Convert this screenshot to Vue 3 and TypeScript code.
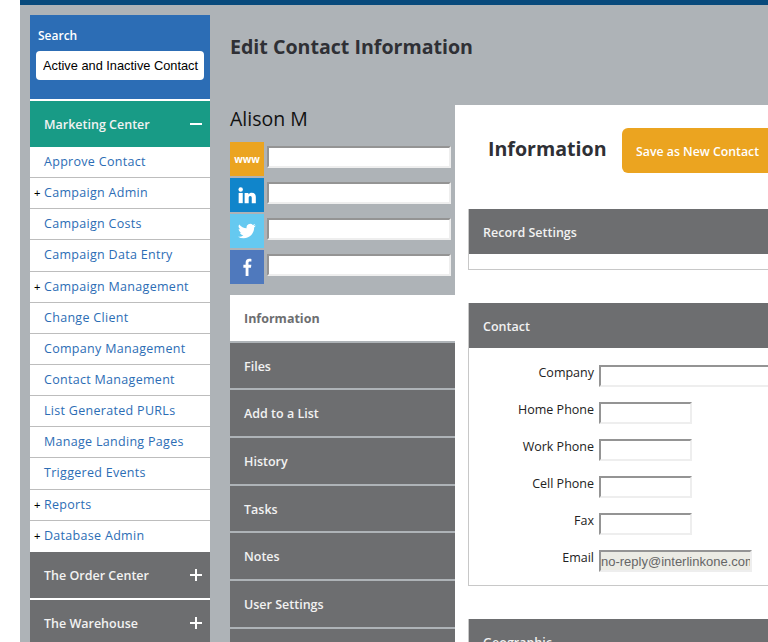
<script setup lang="ts">
const menuItems = [
  { label: 'Approve Contact', more: false },
  { label: 'Campaign Admin', more: true },
  { label: 'Campaign Costs', more: false },
  { label: 'Campaign Data Entry', more: false },
  { label: 'Campaign Management', more: true },
  { label: 'Change Client', more: false },
  { label: 'Company Management', more: false },
  { label: 'Contact Management', more: false },
  { label: 'List Generated PURLs', more: false },
  { label: 'Manage Landing Pages', more: false },
  { label: 'Triggered Events', more: false },
  { label: 'Reports', more: true },
  { label: 'Database Admin', more: true },
]

const tabs = ['Files', 'Add to a List', 'History', 'Tasks', 'Notes', 'User Settings', '']

const fields = [
  { label: 'Company', wide: true },
  { label: 'Home Phone', wide: false },
  { label: 'Work Phone', wide: false },
  { label: 'Cell Phone', wide: false },
  { label: 'Fax', wide: false },
]
</script>

<template>
  <div class="page">
    <div class="topbar"></div>
    <div class="shell">
      <aside class="sidebar">
        <div class="search">
          <label class="search-label">Search</label>
          <input class="search-input" value="Active and Inactive Contact" />
        </div>
        <div class="section active">
          <span>Marketing Center</span>
          <span class="minus"></span>
        </div>
        <ul class="menu">
          <li v-for="item in menuItems" :key="item.label">
            <span v-if="item.more" class="more">+</span>
            <a>{{ item.label }}</a>
          </li>
        </ul>
        <div class="section">
          <span class="section-label">The Order Center</span>
          <span class="plus"></span>
        </div>
        <div class="section">
          <span class="section-label">The Warehouse</span>
          <span class="plus"></span>
        </div>
      </aside>

      <main class="main">
        <h1 class="title">Edit Contact Information</h1>
        <div class="columns">
          <div class="left">
            <h2 class="name">Alison M</h2>
            <div class="social-list">
              <div class="social">
                <div class="badge www">www</div>
                <input class="field social-input" />
              </div>
              <div class="social">
                <div class="badge linkedin">
                  <svg width="19" height="17" viewBox="0 0 22 20" fill="#fff">
                    <circle cx="3" cy="3" r="2.6" />
                    <rect x="0.6" y="7" width="4.8" height="12" />
                    <path d="M7.6 7h4.5v1.8C12.9 7.5 14.3 6.700 16 6.700c3.400 0 4.800 2.100 4.800 5.500V19h-4.800v-6c0-1.500-.5-2.500-1.800-2.500s-1.800 1-1.800 2.500v6H7.600z" />
                  </svg>
                </div>
                <input class="field social-input" />
              </div>
              <div class="social">
                <div class="badge twitter">
                  <svg width="18" height="18" viewBox="0 0 24 24" fill="#fff">
                    <path d="M23.600 4.600c-.9.400-1.800.7-2.800.8 1-.6 1.800-1.600 2.100-2.700-.9.600-2 1-3.100 1.200A4.900 4.900 0 0 0 11.500 8.400 13.900 13.900 0 0 1 1.600 3.300a4.900 4.900 0 0 0 1.500 6.500c-.8 0-1.500-.2-2.200-.6 0 2.400 1.700 4.400 3.900 4.900-.7.200-1.500.2-2.200.1.600 2 2.400 3.400 4.600 3.400A9.800 9.800 0 0 1 0 19.600a13.900 13.900 0 0 0 7.500 2.200c9.100 0 14.300-7.700 14-14.600 1-.7 1.800-1.600 2.100-2.600z" />
                  </svg>
                </div>
                <input class="field social-input" />
              </div>
              <div class="social">
                <div class="badge facebook">
                  <svg width="9" height="18" viewBox="0 0 12 24" fill="#fff">
                    <path d="M3.500 24V13H.5V9h3V6.200C3.500 2.800 5.400 1 8.400 1c1.300 0 2.400.1 2.800.2v3.500H9.100c-1.500 0-1.800.8-1.800 1.900V9h3.800l-.5 4H7.300v11z" />
                  </svg>
                </div>
                <input class="field social-input" />
              </div>
            </div>
            <nav class="tabs">
              <div class="tab current">Information</div>
              <div v-for="tab in tabs" :key="tab" class="tab">{{ tab }}</div>
            </nav>
          </div>

          <div class="panel">
            <div class="panel-head">
              <h2 class="panel-title">Information</h2>
              <button class="save">Save as New Contact</button>
            </div>
            <section class="box record">
              <h3 class="box-head">Record Settings</h3>
            </section>
            <section class="box">
              <h3 class="box-head">Contact</h3>
              <div class="form">
                <div v-for="field in fields" :key="field.label" class="row">
                  <label>{{ field.label }}</label>
                  <input class="field" :class="field.wide ? 'wide' : 'short'" />
                </div>
                <div class="row">
                  <label>Email</label>
                  <input class="field short email" value="no-reply@interlinkone.com" disabled />
                </div>
              </div>
            </section>
            <section class="box">
              <h3 class="box-head">Geographic</h3>
            </section>
          </div>
        </div>
      </main>
    </div>
  </div>
</template>

<style>
html,
body {
  margin: 0;
  height: 642px;
  overflow: hidden;
  background: #fff;
}
</style>

<style scoped>
.page {
  width: 1020px;
  margin-left: 20px;
  font-family: "Open Sans", "Noto Sans", sans-serif;
}

.topbar {
  height: 5px;
  background: #084a7c;
}

.shell {
  display: flex;
  height: 637px;
  padding: 10px 0 0 10px;
  box-sizing: border-box;
  background: #aeb3b7;
  overflow: hidden;
}

.sidebar {
  width: 180px;
  flex: none;
  align-self: flex-start;
  background: #fff;
}

.search {
  height: 84px;
  margin-bottom: 2px;
  padding: 12px 6px 0 8px;
  box-sizing: border-box;
  background: #2c6db5;
  color: #fff;
}

.search-label {
  display: block;
  font-size: 12px;
  line-height: 17px;
  font-weight: 600;
}

.search-input {
  display: block;
  width: 168px;
  height: 29px;
  margin: 7px 0 0 -2px;
  padding: 0 0 0 7px;
  box-sizing: border-box;
  border: 0;
  border-radius: 4px;
  background: #fff;
  color: #000;
  font: 12.8px "Liberation Sans", sans-serif;
}

.section {
  display: flex;
  align-items: center;
  justify-content: space-between;
  height: 46px;
  padding: 0 8px 0 14px;
  background: #6d6e70;
  color: #f2f2f2;
  font-size: 12.5px;
  font-weight: 600;
}

.section + .section {
  margin-top: 2px;
}

.section-label {
  padding-top: 2px;
}

.section.active {
  background: #189b86;
}

.minus,
.plus {
  position: relative;
  width: 12px;
  height: 2px;
  background: #fff;
}

.plus::after {
  content: "";
  position: absolute;
  left: 5px;
  top: -5px;
  width: 2px;
  height: 12px;
  background: #fff;
}

.menu {
  margin: 0;
  padding: 0;
  list-style: none;
  background: #fff;
}

.menu li {
  position: relative;
  height: 31.15px;
  box-sizing: border-box;
  padding-left: 14px;
  border-bottom: 1px solid #bdbdbd;
  color: #2c6db5;
  font-size: 12.5px;
  line-height: 30.5px;
  letter-spacing: 0.3px;
}

.menu li:last-child {
  border-bottom: 0;
}

.more {
  position: absolute;
  left: 4px;
  top: 0;
  color: #000;
  font-size: 11px;
  font-family: "Liberation Sans", sans-serif;
}

.main {
  flex: 1;
  min-width: 0;
  margin-left: 20px;
}

.title {
  margin: 0;
  height: 90px;
  color: #2f3035;
  font-size: 19.6px;
  line-height: 64px;
  font-weight: 700;
}

.columns {
  display: flex;
}

.left {
  width: 225px;
  flex: none;
}

.name {
  margin: 0;
  height: 37px;
  color: #111;
  font-size: 19.5px;
  line-height: 28px;
  font-weight: 400;
}

.social-list {
  display: flex;
  flex-direction: column;
  gap: 2px;
}

.social {
  display: flex;
  align-items: flex-start;
  gap: 3px;
}

.badge {
  display: flex;
  align-items: center;
  justify-content: center;
  width: 34px;
  height: 34px;
  color: #fff;
}

.www {
  background: #eba420;
  font-size: 10px;
  font-weight: 700;
}

.linkedin {
  background: #1085cb;
}

.twitter {
  background: #65c9f0;
}

.facebook {
  background: #4f79bd;
}

.field {
  display: block;
  height: 22px;
  padding: 0;
  box-sizing: border-box;
  border: 2px solid;
  border-color: #949494 #eeeeee #eeeeee #949494;
  background: #fff;
}

.social-input {
  width: 184px;
  margin-top: 4px;
}

.tabs {
  margin-top: 11px;
}

.tab {
  height: 45.67px;
  margin-bottom: 2px;
  padding-left: 14px;
  background: #6d6e70;
  color: #f2f2f2;
  font-size: 12.5px;
  line-height: 47px;
  font-weight: 600;
}

.tab.current {
  background: #fff;
  color: #6d6e70;
  font-weight: 700;
}

.panel {
  flex: 1;
  min-width: 0;
  padding: 23px 0 0 13px;
  background: #fff;
}

.panel-head {
  display: flex;
  align-items: center;
  height: 45px;
  margin-bottom: 36px;
  padding-left: 20px;
}

.panel-title {
  width: 134px;
  margin: -4px 0 0;
  color: #2f3035;
  font-size: 19.6px;
  font-weight: 700;
}

.save {
  width: 220px;
  height: 45px;
  padding: 2px 0 0 14px;
  border: 0;
  border-radius: 6px;
  background: #eba420;
  color: #fff;
  font-family: inherit;
  font-size: 12.3px;
  font-weight: 600;
  text-align: left;
}

.box {
  margin-bottom: 33px;
  border: 1px solid #c8c8c8;
  border-top: 0;
  border-right: 0;
}

.box-head {
  height: 45px;
  margin: 0;
  padding-left: 14px;
  background: #6d6e70;
  color: #f2f2f2;
  font-size: 12.5px;
  line-height: 47px;
  font-weight: 600;
}

.record {
  height: 61px;
  box-sizing: border-box;
}

.form {
  display: flex;
  flex-direction: column;
  gap: 15px;
  height: 237px;
  padding: 17px 0 0 0;
  box-sizing: border-box;
}

.row {
  display: flex;
  height: 22px;
}

.row label {
  width: 125px;
  margin-right: 5px;
  color: #222;
  font-size: 12.5px;
  line-height: 16px;
  text-align: right;
}

.wide {
  width: 280px;
}

.short {
  width: 93px;
}

.email {
  width: 153px;
  padding-left: 0;
  background: #ebebe4;
  color: #666;
  font: 13px "Liberation Sans", sans-serif;
}
</style>
